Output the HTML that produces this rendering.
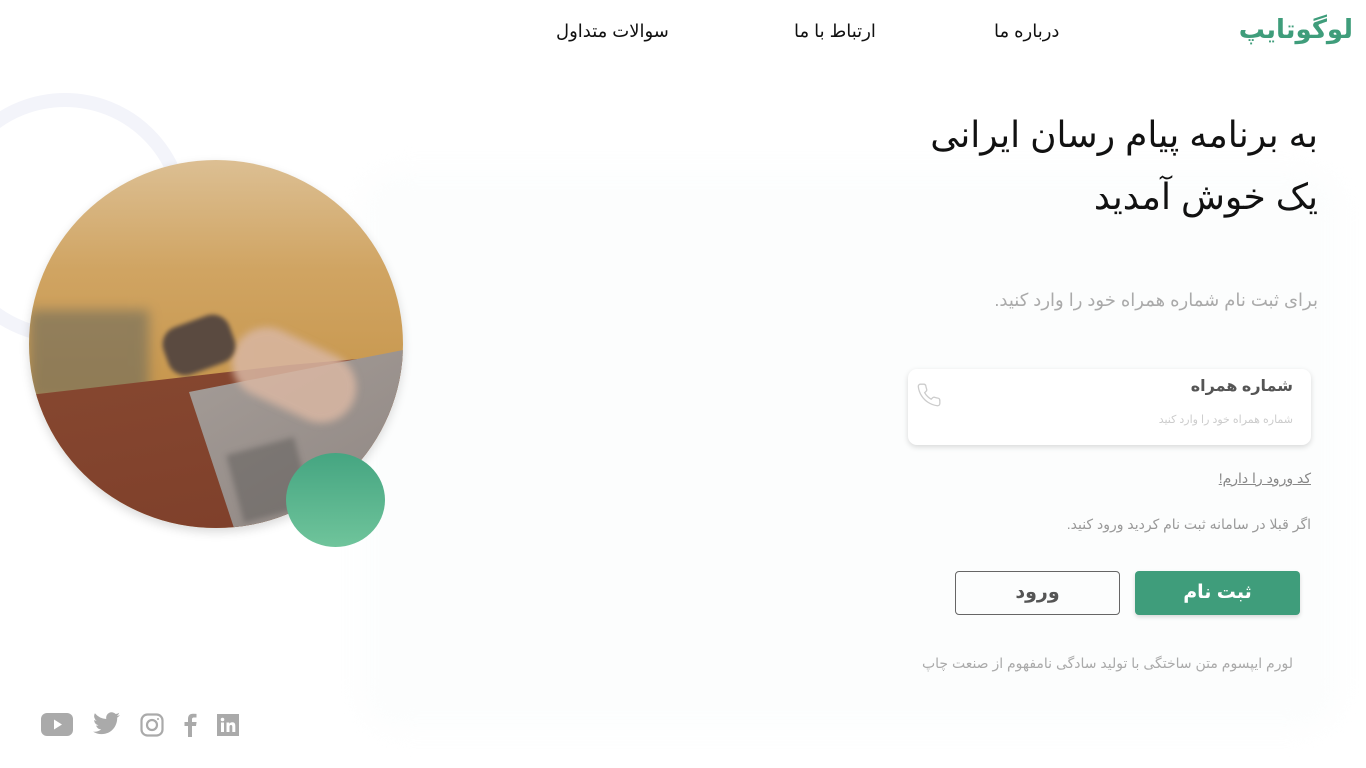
<!DOCTYPE html>
<html lang="fa"><head><meta charset="utf-8">
<style>
*{margin:0;padding:0;box-sizing:border-box}
body{width:1366px;height:768px;overflow:hidden;background:#fff;font-family:"Liberation Sans","Noto Sans CJK SC","DejaVu Sans",sans-serif;position:relative}
.a{position:absolute;white-space:nowrap}
.r{direction:rtl;text-align:right}
</style></head><body>
<div class="a" style="left:0;top:93px;width:250px;height:250px;margin-left:-60px;border:14px solid #f3f4fa;border-radius:50%"></div>
<div class="a" style="left:360px;top:170px;width:980px;height:560px;background:#fcfdfd;border-radius:40px;filter:blur(12px)"></div>

<div class="a r" style="right:13px;top:14px;font-size:26px;font-weight:bold;color:#3f9d7b">لوگوتایپ</div>
<div class="a r" style="left:994px;top:21px;font-size:18px;color:#111">درباره ما</div>
<div class="a r" style="left:794px;top:21px;font-size:18px;color:#111">ارتباط با ما</div>
<div class="a r" style="left:556px;top:21px;font-size:18px;color:#111">سوالات متداول</div>

<div class="a r" style="right:48px;top:104px;font-size:36px;line-height:62px;color:#111">به برنامه پیام رسان ایرانی<br>یک خوش آمدید</div>
<div class="a r" style="right:48px;top:290px;font-size:18px;color:#aaa">برای ثبت نام شماره همراه خود را وارد کنید.</div>

<div class="a" style="left:908px;top:369px;width:403px;height:76px;background:#fff;border-radius:9px;box-shadow:0 2px 6px rgba(0,0,0,.15)"></div>
<div class="a r" style="right:73px;top:376px;font-size:16px;font-weight:bold;color:#555">شماره همراه</div>
<div class="a r" style="right:73px;top:413px;font-size:11px;color:#ccc">شماره همراه خود را وارد کنید</div>
<svg class="a" style="left:916px;top:382px" width="26" height="26" viewBox="0 0 24 24" fill="none" stroke="#ccc" stroke-width="1.2"><path d="M22 16.9v3a2 2 0 0 1-2.2 2 19.8 19.8 0 0 1-8.6-3.1 19.5 19.5 0 0 1-6-6A19.8 19.8 0 0 1 2.1 4.2 2 2 0 0 1 4.1 2h3a2 2 0 0 1 2 1.7c.1 1 .4 1.9.7 2.8a2 2 0 0 1-.5 2.1L8 9.9a16 16 0 0 0 6 6l1.3-1.3a2 2 0 0 1 2.1-.4c.9.3 1.8.6 2.8.7a2 2 0 0 1 1.7 2z"/></svg>

<div class="a r" style="right:55px;top:470px;font-size:14px;color:#888;text-decoration:underline">کد ورود را دارم!</div>
<div class="a r" style="right:55px;top:516px;font-size:14px;color:#999">اگر قبلا در سامانه ثبت نام کردید ورود کنید.</div>

<div class="a" style="left:1135px;top:571px;width:165px;height:44px;background:#3f9d7b;border-radius:4px;box-shadow:0 2px 4px rgba(0,0,0,.15);color:#fff;font-size:19px;font-weight:bold;text-align:center;line-height:44px">ثبت نام</div>
<div class="a" style="left:955px;top:571px;width:165px;height:44px;border:1px solid #666;border-radius:4px;color:#555;font-size:19px;font-weight:bold;text-align:center;line-height:42px">ورود</div>
<div class="a r" style="right:73px;top:655px;font-size:14px;color:#aaa">لورم ایپسوم متن ساختگی با تولید سادگی نامفهوم از صنعت چاپ</div>

<div class="a" style="left:29px;top:160px;width:374px;height:368px;border-radius:50%;overflow:hidden;box-shadow:0 4px 10px rgba(0,0,0,.15);background:linear-gradient(180deg,#dcbf93 0%,#d0a462 30%,#c8984f 60%,#b88a50 100%)">
  <div style="position:absolute;left:0;top:150px;width:120px;height:90px;background:#6b6a5c;opacity:.6;filter:blur(6px)"></div>
  <div style="position:absolute;left:0;top:0;width:374px;height:368px;background:linear-gradient(170deg,#8e4f36,#7e3f2a);clip-path:polygon(0 235px,260px 205px,374px 195px,374px 368px,0 368px)"></div>
  <div style="position:absolute;left:0;top:0;width:374px;height:368px;background:linear-gradient(150deg,#cfc7c2,#a49c97 50%,#8f8682);clip-path:polygon(160px 232px,374px 190px,374px 368px,205px 368px)"></div>
  <div style="position:absolute;left:200px;top:180px;width:130px;height:70px;background:#d9b7a3;border-radius:35px;transform:rotate(25deg);filter:blur(4px);opacity:.85"></div>
  <div style="position:absolute;left:135px;top:160px;width:70px;height:50px;background:#5a4a40;border-radius:18px;transform:rotate(-20deg);filter:blur(2px)"></div>
  <div style="position:absolute;left:205px;top:285px;width:70px;height:70px;background:#5c5a58;transform:rotate(-15deg);opacity:.5;filter:blur(3px)"></div>
</div>
<div class="a" style="left:286px;top:453px;width:99px;height:94px;border-radius:50%;background:linear-gradient(180deg,#45a581,#6fc49b)"></div>

<svg class="a" style="left:41px;top:713px" width="32" height="23" viewBox="0 0 32 23"><rect width="32" height="23" rx="6" fill="#aaa"/><path d="M13 6.5v10l8-5z" fill="#fff"/></svg>
<svg class="a" style="left:93px;top:712px" width="27" height="23" viewBox="0 0 24 20"><path fill="#aaa" d="M24 2.4a10 10 0 0 1-2.8.8A5 5 0 0 0 23.3.4a10 10 0 0 1-3.1 1.2A4.9 4.9 0 0 0 11.8 6 14 14 0 0 1 1.7.9a4.9 4.9 0 0 0 1.5 6.6A4.9 4.9 0 0 1 1 6.9a4.9 4.9 0 0 0 3.9 4.8 5 5 0 0 1-2.2.1 4.9 4.9 0 0 0 4.6 3.4A9.9 9.9 0 0 1 0 17.2 14 14 0 0 0 7.5 19.4c9.1 0 14-7.5 14-14v-.6A10 10 0 0 0 24 2.4z"/></svg>
<svg class="a" style="left:140px;top:713px" width="24" height="24" viewBox="0 0 24 24" fill="none" stroke="#aaa" stroke-width="2.2"><rect x="1.5" y="1.5" width="21" height="21" rx="6"/><circle cx="12" cy="12" r="5"/><circle cx="18" cy="6" r="1" fill="#aaa" stroke="none"/></svg>
<svg class="a" style="left:183px;top:712px" width="14" height="25" viewBox="0 0 14 25"><path fill="#aaa" d="M9 25V14h4l.6-4H9V7.5c0-1.2.4-2 2-2h2.5V1.9A30 30 0 0 0 10 1.7C6.6 1.7 5 3.7 5 7v3H1.5v4H5v11z"/></svg>
<svg class="a" style="left:217px;top:714px" width="22" height="22" viewBox="0 0 22 22"><rect width="22" height="22" fill="#aaa"/><rect x="4" y="8.5" width="3" height="9.5" fill="#fff"/><circle cx="5.5" cy="5.5" r="1.8" fill="#fff"/><path d="M9.5 8.5h2.8v1.4c.6-1 1.7-1.6 3-1.6 2.5 0 3 1.6 3 3.8V18h-3v-5c0-1.1-.2-2-1.3-2s-1.5.8-1.5 2V18h-3z" fill="#fff"/></svg>
</body></html>
